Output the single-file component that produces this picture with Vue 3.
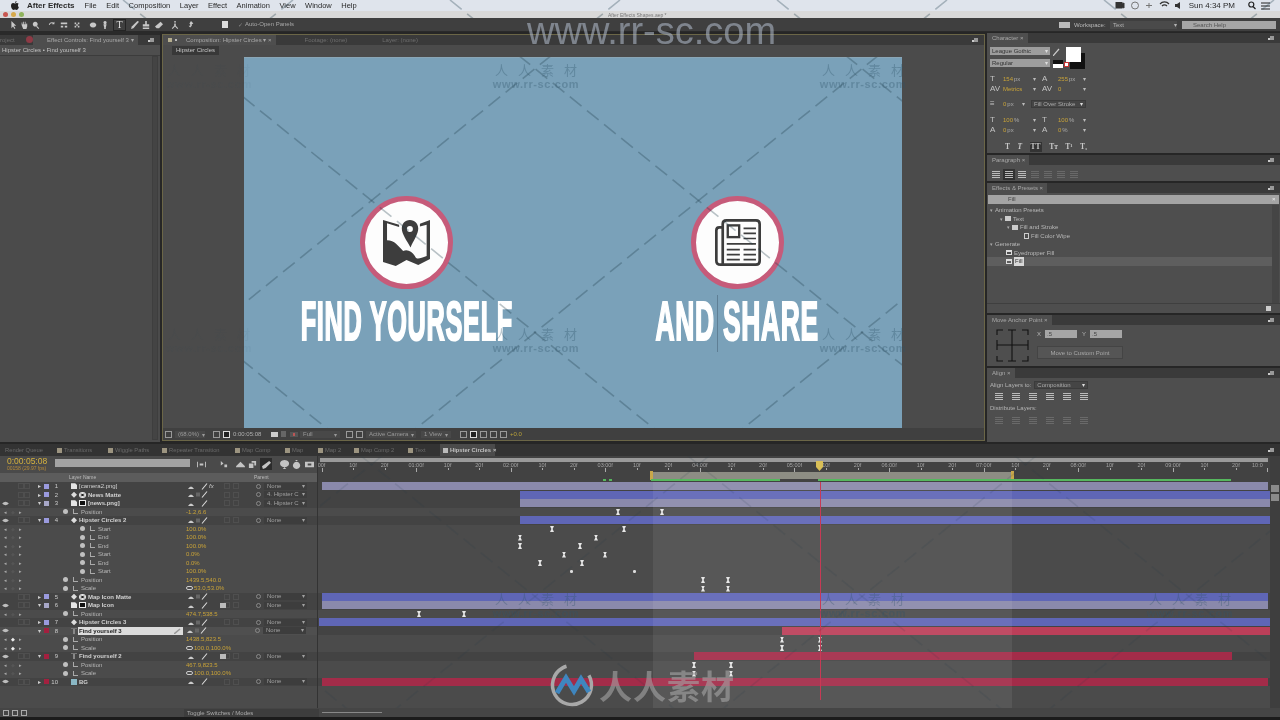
<script setup>
const menus = ['File', 'Edit', 'Composition', 'Layer', 'Effect', 'Animation', 'View', 'Window', 'Help']

const tools = [
  { x: 9, d: 'M3 0v9l2-2 2 3 1-1-2-3h3z' },
  { x: 20, d: 'M2 5V2h1v2h1V1h1v3h1V1h1v3h1V3h1v4L8 10H4z' },
  { x: 32, d: 'M4 1a3 3 0 1 0 .1 0zM6 6l3 3-1 1-3-3z' },
  { x: 48, d: 'M1 5a4 4 0 0 1 6-3l1-1v3H5l1-1a3 3 0 0 0-4 2z' },
  { x: 60, d: 'M1 2h8v2H1zM1 6h3v2H1zM6 6h3v2H6z' },
  { x: 73, d: 'M2 2h2v2H2zM6 2h2v2H6zM4 4h2v2H4zM2 6h2v2H2zM6 6h2v2H6z' },
  { x: 89, d: 'M5 2a4 3 0 1 0 .1 0z' },
  { x: 101, d: 'M5 0a2 2 0 1 0 .1 0zM3 4h4l-1 4H4zM4 8h2v2H4z' },
  { x: 131, d: 'M8 0l2 1-7 8-3 1 1-3z' },
  { x: 142, d: 'M4 0h2v4h3v3H1V4h3zM1 8h8v2H1z' },
  { x: 155, d: 'M7 1l3 3-5 5H2L0 7z' },
  { x: 171, d: 'M5 0a1 1 0 1 0 .1 0zM4 3h2v3l3 3-1 1-3-3-3 3-1-1 3-3z' },
  { x: 187, d: 'M5 0l3 3-2 1v2L4 8 2 6h2V4L3 3z' }
]

const tlIcons = [
  { x: 0, d: 'M0 2h1v6H0zM3 4h4v2H3zM9 2h1v6H9z' },
  { x: 22, d: 'M2 1l3 3-3 2zM6 5h3v3H6z' },
  { x: 39, d: 'M5 2l5 5v1H0V7z' },
  { x: 51, d: 'M1 4h5v5H1zM4 1h5v5H7V3H4z' },
  { x: 65, d: 'M8 1l2 2-6 6-3 1-1-3z' },
  { x: 83, d: 'M5 0a5 4 0 1 0 .1 0zM3 10h4l-2-2z' },
  { x: 95, d: 'M5 2a4 4 0 1 0 .1 0zM4 0h2v1H4z' },
  { x: 108, d: 'M0 2h10v6H0zM3 4v2h4V4z' }
]

const tlTabs = [
  { name: 'Render Queue', w: 52, plain: true },
  { name: 'Transitions', w: 51 },
  { name: 'Wiggle Paths', w: 54 },
  { name: 'Repeater Transition', w: 73 },
  { name: 'Map Comp', w: 50 },
  { name: 'Map', w: 33 },
  { name: 'Map 2', w: 36 },
  { name: 'Map Comp 2', w: 54 },
  { name: 'Text', w: 32 },
  { name: 'Hipster Circles', w: 55, active: true }
]

const LAV = '#8a89ab'
const BLUE = '#5f66b6'
const ROSE = '#bc3f59'
const RED = '#a32c49'
const PURPLE = '#9a9ade'
const CRIM = '#a3203f'

const rows = [
  { n: 1, name: '[camera2.png]', src: 'file', color: PURPLE, twirl: '▸', eye: false, fx: true, parent: 'None', bar: [322, 1268, LAV], plain: true },
  { n: 2, name: 'News Matte', src: 'star', matte: 'light', color: PURPLE, twirl: '▸', eye: false, box: true, parent: '4. Hipster C', bar: [520, 1270, BLUE] },
  { n: 3, name: '[news.png]', src: 'file', matte: 'dark', color: '#a8a8c8', twirl: '▾', eye: true, parent: '4. Hipster C', bar: [520, 1270, LAV] },
  { prop: 'Position', value: '-1.2,6.6', keys: [618, 662] },
  { n: 4, name: 'Hipster Circles 2', src: 'star', color: PURPLE, twirl: '▾', eye: true, box: true, parent: 'None', bar: [520, 1270, BLUE] },
  { prop: 'Start', deep: true, value: '100.0%', keys: [552, 624] },
  { prop: 'End', deep: true, value: '100.0%', keys: [520, 596] },
  { prop: 'End', deep: true, value: '100.0%', keys: [520, 580] },
  { prop: 'Start', deep: true, value: '0.0%', keys: [564, 605] },
  { prop: 'End', deep: true, value: '0.0%', keys: [540, 582] },
  { prop: 'Start', deep: true, value: '100.0%', dots: [571, 634] },
  { prop: 'Position', value: '1439.5,540.0', keys: [703, 728] },
  { prop: 'Scale', link: true, value: '53.0,53.0%', keys: [703, 728] },
  { n: 5, name: 'Map Icon Matte', src: 'star', matte: 'light', color: PURPLE, twirl: '▸', eye: false, box: true, parent: 'None', bar: [322, 1268, BLUE] },
  { n: 6, name: 'Map Icon', src: 'file', matte: 'dark', color: '#a8a8c8', twirl: '▾', eye: true, cam: true, parent: 'None', bar: [322, 1268, LAV] },
  { prop: 'Position', value: '474.7,538.5', keys: [419, 464] },
  { n: 7, name: 'Hipster Circles 3', src: 'star', color: PURPLE, twirl: '▸', eye: false, box: true, parent: 'None', bar: [319, 1270, BLUE] },
  { n: 8, name: 'Find yourself 3', src: 'text', color: CRIM, twirl: '▾', eye: true, box: true, parent: 'None', bar: [782, 1270, ROSE], selected: true },
  { prop: 'Position', value: '1438.5,823.5', keys: [782, 820], on: true },
  { prop: 'Scale', link: true, value: '100.0,100.0%', keys: [782, 820], on: true },
  { n: 9, name: 'Find yourself 2', src: 'text', color: CRIM, twirl: '▾', eye: true, cam: true, parent: 'None', bar: [694, 1232, RED], thin: true },
  { prop: 'Position', value: '467.9,823.5', keys: [694, 731] },
  { prop: 'Scale', link: true, value: '100.0,100.0%', keys: [694, 731] },
  { n: 10, name: 'BG', src: 'solid', color: CRIM, twirl: '▸', eye: true, parent: 'None', bar: [322, 1268, RED] }
]

// ruler: one second is 94.6px, a tick every 10 frames
const ticks = []
for (let i = 0; i <= 30; i++) {
  const sec = Math.floor(i / 3)
  const major = i % 3 === 0
  let label = (i % 3) * 10 + 'f'
  if (i === 0) label = '00f'
  else if (i === 30) label = '10:0'
  else if (major) label = String(sec).padStart(2, '0') + ':00f'
  ticks.push({ x: 3.5 + i * 31.53, label, major, last: i === 30 })
}

const trackX = x => x - 318

const effects = [
  { text: 'Animation Presets', pad: 3, twirl: true },
  { text: 'Text', pad: 13, twirl: true, icon: 'folder' },
  { text: 'Fill and Stroke', pad: 20, twirl: true, icon: 'folder' },
  { text: 'Fill Color Wipe', pad: 37, icon: 'preset' },
  { text: 'Generate', pad: 3, twirl: true },
  { text: 'Eyedropper Fill', pad: 19, icon: 'fx' },
  { text: 'Fill', pad: 19, icon: 'fx', active: true }
]

// faint watermark tiles and the diagonals between them
const marks = [
  { x: 209, y: 60, dim: true },
  { x: 209, y: 324, dim: true },
  { x: 536, y: 60 },
  { x: 863, y: 60 },
  { x: 536, y: 324 },
  { x: 863, y: 324 },
  { x: 536, y: 589 },
  { x: 863, y: 589 },
  { x: 1190, y: 589 }
]
const diagonals = []
for (let k = -3; k <= 3; k++) {
  const a = 123 + 327 * k
  diagonals.push({ x1: a, x2: a + 892 })
}
for (let k = -1; k <= 5; k++) {
  const b = 293 + 327 * k
  diagonals.push({ x1: b, x2: b - 892 })
}
</script>

<template>
  <div class="app">
    <div class="menubar">
      <svg class="apple" width="8" height="9" viewBox="0 0 10 11"><path d="M7 0C6 0 5 1 5 2.4 6 2.4 7 1.4 7 0zM5 3C4 3 3.5 2.5 2.7 2.5 1 2.5 0 4 0 6c0 2 1.5 5 3 5 .8 0 1.2-.5 2-.5s1.200.5 2 .5c1.200 0 2.400-2 2.800-3.400C8.500 7 8.200 4 9.600 3.400 9 2.700 8 2.500 7.400 2.500 6.500 2.500 6 3 5 3z" fill="#222" /></svg>
      <b class="menu-app">After Effects</b>
      <span v-for="m in menus" :key="m" class="menu-item">{{ m }}</span>
      <div class="menu-right">
        <svg width="58" height="9" viewBox="0 0 58 9" fill="none" stroke="#333">
          <rect x="4" y="1.500" width="6" height="5.500" fill="#333" />
          <path d="M10 3l2-1v5l-2-1" fill="#333" />
          <circle cx="23" cy="4.500" r="3.500" stroke="#777" />
          <path d="M34 4.500h6M37 2v5" stroke="#777" />
          <path d="M48 3a6 6 0 0 1 9 0M50 5a3.500 3.500 0 0 1 5 0" stroke-width="1.200" />
        </svg>
        <svg width="6" height="9" viewBox="0 0 6 9"><path d="M0 3h2l3-2v7L2 6H0z" fill="#333" /></svg>
        <span class="clock">Sun 4:34 PM</span>
        <svg width="8" height="9" viewBox="0 0 8 9" fill="none" stroke="#222" stroke-width="1.200"><circle cx="3.300" cy="3.500" r="2.500" /><path d="M5 5.500l2.500 2.500" /></svg>
        <svg width="9" height="8" viewBox="0 0 9 8" fill="none" stroke="#222"><path d="M0 1h9M0 4h9M0 7h9" /></svg>
      </div>
    </div>

    <div class="titlebar">
      <i class="light red"></i><i class="light amber"></i><i class="light green"></i>
      <span class="doc-title">After Effects Shapes.aep *</span>
    </div>

    <div class="toolbar">
      <div class="tool-icons">
        <svg v-for="t in tools" :key="t.x" class="tool" :style="{ left: t.x + 'px' }" width="8" height="8" viewBox="0 0 10 10"><path :d="t.d" fill="#c8c8c8" /></svg>
        <span class="tool-t">T</span>
        <i class="tool-file"></i>
      </div>
      <span class="auto-open"><span class="check">✓</span>Auto-Open Panels</span>
      <div class="workspace">
        <i class="ws-icon"></i>
        <span class="ws-label">Workspace:</span>
        <span class="ws-select">Text<em>▾</em></span>
        <span class="ws-search">Search Help</span>
      </div>
    </div>

    <div class="main">
      <div class="left-panel">
        <div class="strip"></div>
        <div class="tabbar">
          <span class="tab dim">roject</span>
          <i class="tab-dot"></i>
          <span class="tab on">Effect Controls: Find yourself 3 <em>▾</em></span>
          <span class="panel-menu"></span>
        </div>
        <div class="sub-row">Hipster Circles • Find yourself 3</div>
        <div class="left-body"><i class="scroll"></i></div>
      </div>

      <div class="comp-panel">
        <div class="tabbar comp-tabs">
          <span class="tab on"><i class="tab-square"></i>Composition: Hipster Circles <em>▾</em> ×</span>
          <span class="tab dim footage">Footage: (none)</span>
          <span class="tab dim layer-tab">Layer: (none)</span>
          <span class="panel-menu"></span>
        </div>
        <div class="crumb-row"><span class="crumb">Hipster Circles</span></div>
        <div class="viewer">
          <div class="canvas">
            <div class="promo find">
              <div class="badge">
                <svg width="47" height="46" viewBox="310 118 140 137">
                  <path fill="#3d3d3d" d="M310 118L358 132V139L322 128V178C345 178 355 195 370 210C385 205 395 212 405 225C410 238 420 232 440 225V132L420 137V129L450 118V234L415 252L380 237L348 255L310 243Z" />
                  <path fill="#3d3d3d" fill-rule="evenodd" d="M390 118C375 118 366 130 366 143C366 160 382 180 392 200C400 180 415 160 415 143C415 130 405 118 390 118ZM390 136A9 9 0 1 0 390.100 154A9 9 0 1 0 390 136Z" />
                </svg>
              </div>
              <div class="headline">FIND YOURSELF</div>
            </div>
            <div class="promo share">
              <div class="badge">
                <svg width="46" height="47" viewBox="223 122 137 140" fill="none" stroke="#3d3d3d">
                  <path stroke-width="8" d="M246 147H236Q227 147 227 156V246Q227 258 240 258H345Q356 258 356 247V137Q356 126 345 126H257Q246 126 246 137V258" />
                  <rect x="261" y="141" width="34" height="35" stroke-width="7" />
                  <path stroke-width="5" d="M308 150H345M308 165H345M308 180H345M258 196H345M258 213H297M308 213H345M258 228H297M308 228H345M258 243H297M308 243H345" />
                </svg>
              </div>
              <div class="headline">AND SHARE</div>
              <i class="caret"></i>
            </div>
          </div>
        </div>
        <div class="viewer-bar">
          <i class="vb-box"></i>
          <span class="vb-select zoomlevel">(68.0%) <em>▾</em></span>
          <i class="vb-box first"></i><i class="vb-box lit"></i>
          <span class="vb-time">0:00:05:08</span>
          <i class="vb-cam"></i>
          <i class="vb-lock"></i>
          <i class="vb-dots"></i>
          <span class="vb-select full">Full <em>▾</em></span>
          <i class="vb-box"></i><i class="vb-box"></i>
          <span class="vb-select cam">Active Camera <em>▾</em></span>
          <span class="vb-select view">1 View <em>▾</em></span>
          <i class="vb-box"></i><i class="vb-box lit"></i><i class="vb-box"></i><i class="vb-box"></i><i class="vb-box"></i>
          <span class="vb-exposure">+0.0</span>
        </div>
      </div>

      <div class="right-col">
        <section class="panel character">
          <div class="tabbar"><span class="tab on">Character ×</span><span class="panel-menu"></span></div>
          <div class="char-body">
            <div class="char-fonts">
              <div class="font-selects">
                <span class="field">League Gothic<em>▾</em></span>
                <span class="field">Regular<em>▾</em></span>
              </div>
              <svg class="dropper" width="8" height="8" viewBox="0 0 8 8"><path d="M0 8l6-7" stroke="#ccc" stroke-width="1.200" /></svg>
              <div class="swatches">
                <i class="sw-black"></i><i class="sw-white"></i>
                <i class="sw-mini"></i><i class="sw-none"></i>
              </div>
            </div>
            <div class="char-grid">
              <span class="c"><u>T</u><b>154</b> px<em>▾</em></span><span class="c"><u>A</u><b>255</b> px<em>▾</em></span>
              <span class="c"><u>AV</u><b>Metrics</b><em>▾</em></span><span class="c"><u>AV</u><b>0</b><em>▾</em></span>
            </div>
            <div class="char-stroke">
              <span class="c"><u>≡</u><b>0</b> px<em>▾</em></span>
              <span class="field dark">Fill Over Stroke<em>▾</em></span>
            </div>
            <div class="char-grid lower">
              <span class="c"><u>T</u><b>100</b> %<em>▾</em></span><span class="c"><u>T</u><b>100</b> %<em>▾</em></span>
              <span class="c"><u>A</u><b>0</b> px<em>▾</em></span><span class="c"><u>A</u><b>0</b> %<em>▾</em></span>
            </div>
            <div class="char-styles">
              <span>T</span><span class="ital">T</span><span class="sel">TT</span><span>Tт</span><span>T¹</span><span>T₁</span>
            </div>
          </div>
        </section>

        <section class="panel paragraph">
          <div class="tabbar"><span class="tab on">Paragraph ×</span><span class="panel-menu"></span></div>
          <div class="icon-row para">
            <i class="lines"></i><i class="lines sel"></i><i class="lines"></i>
            <i class="lines faint"></i><i class="lines faint"></i><i class="lines faint"></i><i class="lines faint"></i>
          </div>
        </section>

        <section class="panel effects">
          <div class="tabbar"><span class="tab on">Effects &amp; Presets ×</span><span class="panel-menu"></span></div>
          <div class="fx-search"><span class="fx-query">Fill</span><i>×</i></div>
          <div class="fx-body">
            <div class="fx-tree">
              <div v-for="e in effects" :key="e.text" class="fx-row" :class="{ active: e.active }" :style="{ paddingLeft: e.pad + 'px' }">
                <em v-if="e.twirl">▾</em>
                <i v-if="e.icon" :class="'fx-' + e.icon"></i>
                <span>{{ e.text }}</span>
              </div>
            </div>
            <i class="fx-scroll"></i>
          </div>
          <div class="fx-foot"><i></i></div>
        </section>

        <section class="panel anchor">
          <div class="tabbar"><span class="tab on">Move Anchor Point ×</span><span class="panel-menu"></span></div>
          <div class="anchor-body">
            <svg width="33" height="33" viewBox="0 0 33 33" fill="none" stroke="#111" stroke-width="1.100">
              <path d="M1 6V1h6M12 1h8M16 1v11M26 1h6v5M1 11v10M1 16h31M32 11v10M16 12v10M1 27v5h6M12 32h8M16 22v10M26 32h6v-5" />
            </svg>
            <div class="anchor-side">
              <div class="xy"><span>X</span><i>.5</i><span>Y</span><i>.5</i></div>
              <div class="btn">Move to Custom Point</div>
            </div>
          </div>
        </section>

        <section class="panel align">
          <div class="tabbar"><span class="tab on">Align ×</span><span class="panel-menu"></span></div>
          <div class="align-body">
            <div class="align-to"><span>Align Layers to:</span><span class="field dark">Composition<em>▾</em></span></div>
            <div class="icon-row al"><i v-for="n in 6" :key="n" class="lines"></i></div>
            <div class="dist">Distribute Layers:</div>
            <div class="icon-row al"><i v-for="n in 6" :key="n" class="lines faint"></i></div>
          </div>
        </section>
      </div>
    </div>

    <div class="timeline">
      <div class="tl-tabs">
        <span v-for="t in tlTabs" :key="t.name" class="tl-tab" :class="{ active: t.active }" :style="{ width: t.w + 'px' }"><i v-if="!t.plain"></i>{{ t.name }}<em v-if="t.active">×</em></span>
        <span class="panel-menu tl-menu"></span>
      </div>
      <div class="tl-top">
        <div class="tl-controls">
          <div class="tl-head">
            <div class="timecode"><b>0:00:05:08</b><span>00158 (29.97 fps)</span></div>
            <div class="tl-search"></div>
            <div class="tl-icons">
              <i class="mb-sel"></i>
              <svg v-for="t in tlIcons" :key="t.x" :style="{ left: t.x + 'px' }" width="9" height="9" viewBox="0 0 10 10"><path :d="t.d" fill="#c4c4c4" /></svg>
            </div>
          </div>
          <div class="col-head">
            <span class="ch-name">Layer Name</span>
            <span class="ch-parent">Parent</span>
          </div>
        </div>
        <div class="ruler">
          <div class="nav-bar"></div>
          <div v-for="t in ticks" :key="t.x" class="tick" :class="{ major: t.major, last: t.last }" :style="{ left: t.x + 'px' }">
            <span>{{ t.label }}</span><i></i>
          </div>
          <div class="work-bar"></div>
          <i class="wa-handle" style="left: 332px"></i>
          <i class="wa-handle" style="left: 693px"></i>
          <i class="cache" style="left: 333px; width: 129px"></i>
          <i class="cache" style="left: 500px; width: 413px"></i>
          <i class="cache" style="left: 285px; width: 3px"></i>
          <i class="cache" style="left: 291px; width: 3px"></i>
          <i class="cti-head"></i>
        </div>
        <div class="tl-side"></div>
      </div>

      <div class="tl-main">
        <div class="tl-rows">
          <div v-for="(r, i) in rows" :key="i" class="tl-row" :class="{ layer: r.n, prop: r.prop, sel: r.selected }">
            <div class="tl-left">
              <template v-if="r.n">
                <span class="sw-col">
                  <svg v-if="r.eye" width="7" height="5" viewBox="0 0 8 6"><path d="M0 3q4-4 8 0q-4 4-8 0z" fill="#bdbdbd" /></svg>
                  <i class="ghost"></i><i class="ghost"></i>
                </span>
                <span class="twirl">{{ r.twirl }}</span>
                <i class="label" :style="{ background: r.color }"></i>
                <span class="num">{{ r.n }}</span>
                <span class="src" :class="'src-' + r.src"></span>
                <span class="lname" :class="{ plain: r.plain, shifted: r.matte }">
                  <i v-if="r.matte" class="matte" :class="r.matte"></i>
                  <span>{{ r.name }}</span>
                  <svg v-if="r.selected" class="lpen" width="7" height="6" viewBox="0 0 7 6"><path d="M0 6l6-5" stroke="#999" stroke-width="1.500" /></svg>
                </span>
                <span class="switches">
                  <svg width="24" height="7" viewBox="0 0 24 7"><path d="M1 6q3-5 6 0z" fill="#ccc" /><rect v-if="r.box" x="9" y="1.500" width="4" height="4" fill="#666" /><path d="M15 6.500l5-6" stroke="#ddd" stroke-width="1.100" /></svg>
                  <small v-if="r.fx">fx</small>
                  <i v-if="r.cam" class="cam-ic"></i>
                </span>
                <span class="modes"><i class="ghost"></i><i class="ghost"></i></span>
                <span class="spiral"></span>
                <span class="parent">{{ r.parent }}<em>▾</em></span>
              </template>
              <template v-else>
                <span class="nav"><em>◂</em><em :class="{ lit: r.on }">◆</em><em>▸</em></span>
                <span class="stop" :class="{ deep: r.deep }"></span>
                <span class="graph"></span>
                <span class="pname">{{ r.prop }}</span>
                <span class="pvalue" :class="{ linked: r.link }"><svg v-if="r.link" width="7" height="4" viewBox="0 0 7 4" fill="none" stroke="#ccc"><rect x=".5" y=".5" width="6" height="3" rx="1.500" /></svg>{{ r.value }}</span>
              </template>
            </div>
            <div class="tl-track">
              <i v-if="r.bar" class="bar" :class="{ thin: r.thin }" :style="{ left: trackX(r.bar[0]) + 'px', width: r.bar[1] - r.bar[0] + 'px', background: r.bar[2] }"></i>
              <i v-for="k in r.keys" :key="k" class="key" :style="{ left: trackX(k) - 2 + 'px' }"></i>
              <i v-for="k in r.dots" :key="k" class="dot" :style="{ left: trackX(k) - 1 + 'px' }"></i>
            </div>
          </div>
          <div class="tl-empty"><div class="tl-left"></div><div class="tl-track"></div></div>
          <i class="work-shade"></i>
          <i class="cti-line"></i>
        </div>
        <div class="tl-side scroller"><i></i><i></i></div>
      </div>

      <div class="tl-foot">
        <i class="foot-ic"></i><i class="foot-ic"></i><i class="foot-ic"></i>
        <span class="toggle">Toggle Switches / Modes</span>
        <i class="zoom-bar"></i>
      </div>
    </div>
    <div class="bottom-edge"></div>

    <div class="overlay">
      <svg class="dashes" width="1280" height="720" viewBox="0 0 1280 720">
        <defs>
          <clipPath id="bright">
            <rect x="244" y="57" width="658" height="371" />
            <rect x="0" y="0" width="1280" height="18" />
          </clipPath>
          <clipPath id="track">
            <rect x="320" y="456" width="950" height="252" />
          </clipPath>
        </defs>
        <g clip-path="url(#track)" stroke="#1e3a4a" stroke-width="1.600" stroke-dasharray="15 7" stroke-opacity=".12">
          <line v-for="d in diagonals" :key="d.x1" :x1="d.x1" y1="0" :x2="d.x2" y2="720" />
        </g>
        <g clip-path="url(#bright)" stroke="#1e3a4a" stroke-width="1.600" stroke-dasharray="15 7" stroke-opacity=".3">
          <line v-for="d in diagonals" :key="d.x1" :x1="d.x1" y1="0" :x2="d.x2" y2="720" />
        </g>
      </svg>
      <div v-for="m in marks" :key="m.x + '-' + m.y" class="mark" :class="{ dim: m.dim }" :style="{ left: m.x + 'px', top: m.y + 'px' }">
        <span class="mark-cn">人人素材</span>
        <span class="mark-en">www.rr-sc.com</span>
      </div>
      <div class="site">www.rr-sc.com</div>
      <div class="brand">
        <svg width="46" height="46" viewBox="0 0 46 46" fill="none">
          <circle cx="23" cy="23" r="19.500" stroke="#a8a8a8" stroke-width="3.500" stroke-dasharray="96 26" transform="rotate(-30 23 23)" />
          <path d="M8 31L17 16l8 13 7-12 8 13" stroke="#3f86bf" stroke-width="5" />
        </svg>
        <span>人人素材</span>
      </div>
    </div>
  </div>
</template>

<style scoped>
.app {
  position: relative;
  width: 1280px;
  height: 720px;
  overflow: hidden;
  display: flex;
  flex-direction: column;
  background: #222;
  font-family: "Liberation Sans", Arial, sans-serif;
  font-size: 6px;
  color: #b4b4b4;
  filter: blur(0.35px);
}
em { font-style: normal; }
i { display: block; font-style: normal; }

/* mac menu bar */
.menubar {
  height: 11px;
  flex: none;
  display: flex;
  align-items: center;
  padding-left: 11px;
  background: #dfe4ec;
  color: #2a2a2a;
  font-size: 7.5px;
}
.menu-app { margin: 0 10px 0 8px; font-size: 8px; }
.menu-item { margin-right: 9.5px; }
.menu-right {
  margin-left: auto;
  padding-right: 10px;
  display: flex;
  align-items: center;
  gap: 5px;
}
.clock { margin: 0 8px 0 3px; font-size: 8px; }
.titlebar {
  height: 7px;
  flex: none;
  display: flex;
  align-items: center;
  gap: 3px;
  padding-left: 3px;
  background: #d9d9d9;
  position: relative;
}
.light { width: 5px; height: 5px; border-radius: 50%; }
.red { background: #c9574f; }
.amber { background: #d6a94a; }
.green { background: #8fb35b; }
.doc-title {
  margin-left: 581px;
  font-size: 5px;
  color: #777;
}

/* tools */
.toolbar {
  height: 14px;
  flex: none;
  display: flex;
  align-items: center;
  background: #3f3f3f;
  border-bottom: 1px solid #2a2a2a;
  box-sizing: border-box;
}
.tool-icons { position: relative; width: 232px; height: 14px; flex: none; }
.tool { position: absolute; top: 3px; }
.tool-t {
  position: absolute;
  left: 113px;
  top: 1px;
  width: 11px;
  height: 10px;
  border: 1px solid #242424;
  font: 10px/10px "Liberation Serif", serif;
  color: #ddd;
  text-align: center;
}
.tool-file { position: absolute; left: 222px; top: 3px; width: 6px; height: 7px; background: #ddd; }
.auto-open { color: #a8a8a8; display: flex; gap: 2px; margin-left: 6px; }
.check { color: #888; }
.workspace { margin-left: auto; display: flex; align-items: center; padding-right: 4px; }
.ws-icon { width: 11px; height: 6px; background: #bbb; margin-right: 4px; }
.ws-label { color: #bbb; margin-right: 6px; width: 30px; white-space: nowrap; }
.ws-select {
  width: 67px;
  height: 8px;
  line-height: 8px;
  background: #4a4a4a;
  padding-left: 3px;
  box-sizing: border-box;
  display: flex;
  justify-content: space-between;
  margin-right: 5px;
}
.ws-search {
  width: 94px;
  height: 8px;
  line-height: 8px;
  background: #a6a6a6;
  color: #555;
  padding-left: 11px;
  box-sizing: border-box;
}

/* panels */
.main { height: 412px; flex: none; display: flex; background: #262626; }
.tabbar {
  height: 10px;
  flex: none;
  display: flex;
  align-items: stretch;
  position: relative;
  background: #3a3a3a;
}
.tab {
  padding: 0 4px 0 5px;
  line-height: 10px;
  color: #a8a8a8;
  white-space: nowrap;
  position: relative;
}
.tab.on { background: #4e4e4e; }
.tab.dim { color: #6e6e6e; }
.panel-menu {
  position: absolute;
  right: 6px;
  top: 3px;
  width: 4px;
  height: 4px;
  background: #999;
  box-shadow: -3px 1px 0 -1px #ccc;
}

.left-panel { width: 160px; flex: none; display: flex; flex-direction: column; }
.strip { height: 3px; background: #2a2a2a; flex: none; }
.left-panel .tab.dim { padding: 0; width: 26px; }
.tab-dot { width: 7px; height: 7px; margin-top: 1px; border-radius: 50%; background: #8d3a45; flex: none; margin-right: 3px; }
.left-panel .tab.on { padding-left: 14px; margin-left: -3px; }
.sub-row {
  height: 10px;
  line-height: 10px;
  padding-left: 2px;
  background: #4e4e4e;
  color: #c2c2c2;
  border-bottom: 1px solid #3c3c3c;
  flex: none;
}
.left-body { flex: 1; background: #4b4b4b; position: relative; margin-bottom: 2px; }
.scroll {
  position: absolute;
  right: 2px;
  top: 0;
  bottom: 2px;
  width: 6px;
  background: #444;
  border: 1px solid #3e3e3e;
  box-sizing: border-box;
}

.comp-panel {
  width: 823px;
  flex: none;
  margin: 2px 2px 3px 2px;
  box-sizing: border-box;
  border: 1px solid #6b6647;
  display: flex;
  flex-direction: column;
  background: #4b4b4b;
}
.comp-tabs .tab.on { padding-left: 23px; }
.tab-square { position: absolute; left: 5px; top: 3px; width: 4px; height: 4px; background: #b4ad8f; box-shadow: 6px 0 0 -1px #bbb; }
.footage { margin-left: 24px; }
.layer-tab { margin-left: 26px; }
.crumb-row { height: 12px; flex: none; padding: 1px 0 0 9px; box-sizing: border-box; }
.crumb {
  display: inline-block;
  padding: 0 4px;
  line-height: 9px;
  background: #383838;
  color: #c6c6c6;
}
.viewer { height: 371px; flex: none; padding-left: 81px; }
.canvas {
  position: relative;
  width: 658px;
  height: 371px;
  background: #7aa1b9;
  box-shadow: inset 0 1px 0 #8aa6b6;
  overflow: hidden;
}
.promo { position: absolute; top: 139px; width: 260px; margin-left: -130px; display: flex; flex-direction: column; align-items: center; }
.find { left: 162.5px; }
.share { left: 493.5px; }
.badge {
  width: 93px;
  height: 93px;
  box-sizing: border-box;
  border-radius: 50%;
  border: 5px solid #c65b7a;
  background: #fdfdfd;
  display: flex;
  align-items: center;
  justify-content: center;
}
.headline {
  margin-top: 5px;
  font: bold 55px/54px "Liberation Sans", sans-serif;
  letter-spacing: 1.5px;
  color: #fff;
  white-space: nowrap;
  -webkit-text-stroke: 2.2px #fff;
  transform: scaleX(0.48);
  transform-origin: center;
}
.find .headline { transform: scaleX(0.46); }
.caret {
  position: absolute;
  left: 109px;
  top: 99px;
  width: 1px;
  height: 57px;
  background: #5f7f95;
}
.viewer-bar {
  flex: 1;
  min-height: 0;
  display: flex;
  align-items: center;
  gap: 2px;
  padding-left: 2px;
  background: #404040;
  white-space: nowrap;
}
.vb-box { width: 7px; height: 7px; border: 1px solid #999; box-sizing: border-box; margin-right: 1px; flex: none; }
.vb-box.lit { background: #222; border-color: #ddd; }
.vb-box.first { margin-left: 6px; }
.vb-select { color: #999; padding: 0 3px; background: #484848; display: flex; gap: 3px; justify-content: space-between; box-sizing: border-box; flex: none; }
.zoomlevel { width: 30px; }
.vb-select.full { width: 40px; margin-right: 4px; }
.vb-select.cam { width: 50px; }
.vb-select.view { width: 30px; margin: 0 7px 0 3px; }
.vb-time { color: #b0b0b0; margin-right: 6px; width: 30px; }
.vb-cam { width: 7px; height: 5px; background: #ccc; margin-right: 1px; }
.vb-lock { width: 5px; height: 6px; background: #666; margin-right: 1px; }
.vb-dots { width: 8px; height: 5px; background: radial-gradient(circle, #b55 30%, #555 31%); margin-left: 1px; }
.vb-exposure { color: #b8a23a; }

/* right column */
.right-col {
  flex: 1;
  display: flex;
  flex-direction: column;
  gap: 2px;
  padding: 1px 0 2px;
  min-width: 0;
}
.panel { background: #4e4e4e; display: flex; flex-direction: column; }
.character { height: 120px; }
.paragraph { height: 26px; }
.effects { height: 130px; }
.anchor { height: 51px; }
.align { height: 74px; }
.field {
  display: flex;
  justify-content: space-between;
  height: 8px;
  line-height: 8px;
  padding: 0 2px;
  background: #9d9d9d;
  color: #333;
  box-sizing: border-box;
  white-space: nowrap;
}
.field em { color: #ddd; }
.field.dark { background: #454545; color: #aaa; border: 1px solid #3b3b3b; line-height: 6px; }
.char-body { padding: 4px 0 0 3px; }
.char-fonts { display: flex; height: 23px; }
.font-selects { width: 60px; display: flex; flex-direction: column; gap: 4px; }
.dropper { margin: 1px 3px 0 3px; }
.swatches { position: relative; width: 34px; }
.sw-black { position: absolute; left: 6px; top: 6px; width: 15px; height: 16px; background: #111; }
.sw-white { position: absolute; left: 2px; top: 0; width: 15px; height: 15px; background: #fff; }
.sw-mini { position: absolute; left: -11px; top: 13px; width: 10px; height: 8px; background: linear-gradient(#111 50%, #fff 50%); }
.sw-none { position: absolute; left: 0; top: 15px; width: 5px; height: 5px; background: #fff; border: 1px solid #c33; box-sizing: border-box; }
.char-grid {
  display: grid;
  grid-template-columns: 52px 50px;
  grid-auto-rows: 10px;
  margin-top: 3.5px;
}
.char-grid.lower { margin-top: 6px; }
.c { display: flex; align-items: center; position: relative; gap: 1px; color: #aaa; line-height: 10px; white-space: nowrap; }
.c u { width: 12px; text-decoration: none; color: #c4c4c4; font-size: 8px; flex: none; }
.c:nth-child(even) u { width: 15px; }
.c b { font-weight: normal; color: #c9a338; }
.c em { position: absolute; right: 6px; color: #bbb; }
.char-stroke { display: grid; grid-template-columns: 41px 55px; height: 10px; margin-top: 5px; align-items: center; }
.char-styles {
  display: flex;
  gap: 7.5px;
  margin: 7px 0 0 15px;
  height: 10px;
  font: bold 7.5px/10px "Liberation Serif", serif;
  color: #c8c8c8;
}
.char-styles .ital { font-style: italic; }
.char-styles .sel { background: #333; padding: 0 1px; }
.icon-row { display: flex; align-items: center; }
.icon-row.para { gap: 5px; padding: 3px 0 0 5px; height: 12px; }
.lines {
  width: 8px;
  height: 7px;
  background: repeating-linear-gradient(#bbb 0 1px, transparent 1px 2px);
}
.lines.sel { outline: 2px solid #333; background-color: #333; }
.lines.faint { opacity: 0.25; }
.fx-search {
  margin: 2px 1px 0 1px;
  height: 9px;
  line-height: 9px;
  background: #a4a4a4;
  color: #444;
  padding-left: 20px;
  position: relative;
  flex: none;
}
.fx-search i { position: absolute; right: 1px; top: 0; width: 6px; color: #eee; }
.fx-body { flex: 1; display: flex; padding: 1px 0 0 0; min-height: 0; }
.fx-tree { flex: 1; padding-top: 1px; }
.fx-row { height: 8.5px; line-height: 8.5px; display: flex; align-items: center; gap: 2px; color: #b8b8b8; }
.fx-row.active { background: #5e5e5e; }
.fx-row.active span { background: #d8d8d8; color: #333; padding: 0 1px; width: 8px; }
.fx-row em { color: #aaa; font-size: 5px; }
.fx-folder { width: 6px; height: 5px; background: #ccc; }
.fx-preset { width: 5px; height: 6px; border: 1px solid #ccc; box-sizing: border-box; }
.fx-fx { width: 6px; height: 5px; border: 1px solid #ddd; border-top-width: 2px; box-sizing: border-box; }
.fx-scroll { width: 7px; margin-right: 1px; background: #454545; }
.fx-foot { height: 9px; border-top: 1px solid #3f3f3f; position: relative; flex: none; }
.fx-foot i { position: absolute; right: 9px; top: 2px; width: 5px; height: 5px; background: #ccc; }
.anchor-body { display: flex; padding: 4px 0 0 9px; gap: 8px; }
.anchor-side { width: 86px; }
.xy { display: flex; align-items: center; height: 9px; gap: 4px; }
.xy i { width: 33px; height: 8px; line-height: 8px; background: #a6a6a6; color: #444; padding-left: 2px; box-sizing: border-box; margin-right: 1px; }
.btn {
  margin-top: 8px;
  height: 13px;
  line-height: 13px;
  text-align: center;
  background: #555;
  border: 1px solid #444;
  box-sizing: border-box;
  color: #a8a8a8;
}
.align-body { padding: 2px 0 0 3px; }
.align-to { display: flex; align-items: center; gap: 3px; height: 9px; white-space: nowrap; }
.align-to .field { width: 54px; }
.icon-row.al { gap: 9px; height: 14px; padding-left: 5px; }
.dist { height: 9px; line-height: 9px; margin-top: 1px; }

/* timeline */
.timeline { flex: 1; display: flex; flex-direction: column; min-height: 0; background: #4a4a4a; }
.tl-tabs {
  height: 12px;
  flex: none;
  display: flex;
  position: relative;
  padding-left: 5px;
  background: #333;
  color: #6a6a6a;
  font-size: 5.8px;
}
.tl-tab { display: flex; align-items: center; gap: 2px; line-height: 12px; white-space: nowrap; box-sizing: border-box; }
.tl-tab i { width: 5px; height: 5px; background: #9c9480; flex: none; }
.tl-tab.active { background: #4b4b4b; color: #c0c0c0; font-weight: bold; padding: 0 3px; }
.tl-tab.active i { background: #bbb; }
.tl-menu { top: 4px; }
.tl-top { height: 26px; flex: none; display: flex; }
.tl-controls { width: 318px; flex: none; display: flex; flex-direction: column; border-right: 1px solid #333; box-sizing: border-box; }
.tl-head { height: 17px; display: flex; position: relative; }
.timecode { width: 55px; padding-left: 7px; box-sizing: border-box; display: flex; flex-direction: column; white-space: nowrap; }
.timecode b { font-size: 8.5px; line-height: 10px; font-weight: normal; color: #d6b23e; }
.timecode span { font-size: 5px; line-height: 5px; color: #b68b3a; }
.tl-search { width: 135px; height: 8px; margin-top: 3px; background: #a3a3a3; }
.tl-icons { position: relative; margin-left: 7px; margin-top: 4px; }
.tl-icons svg { position: absolute; top: 0; }
.mb-sel { position: absolute; left: 63px; top: -2px; width: 12px; height: 12px; background: #2c2c2c; }
.col-head {
  height: 9px;
  line-height: 9px;
  background: #5c5c5c;
  color: #bbb;
  font-size: 5px;
  position: relative;
}
.ch-name { position: absolute; left: 69px; }
.ch-parent { position: absolute; left: 254px; }
.ruler { position: relative; flex: 1; background: #424242; overflow: hidden; }
.nav-bar { position: absolute; left: 2px; right: 2px; top: 2px; height: 4px; background: #9a9a9a; }
.tick { position: absolute; top: 6px; width: 0; }
.tick span { position: absolute; left: -12px; width: 24px; text-align: center; color: #a4a4a4; font-size: 5.5px; line-height: 6px; white-space: nowrap; }
.tick.last span { left: -22px; }
.tick i { position: absolute; top: 6px; left: 0; width: 1px; height: 2px; background: #aaa; }
.tick.major i { height: 4px; }
.work-bar { position: absolute; left: 333px; width: 361px; top: 16px; height: 7px; background: #8d8d84; }
.wa-handle { position: absolute; top: 15px; width: 3px; height: 9px; background: #c9a84a; }
.cache { position: absolute; top: 23px; height: 2px; background: #56b85e; }
.cti-head {
  position: absolute;
  left: 498px;
  top: 5px;
  width: 7px;
  height: 10px;
  background: #d9bf57;
  clip-path: polygon(0 0, 100% 0, 100% 60%, 50% 100%, 0 60%);
}
.tl-side { width: 10px; flex: none; background: #3e3e3e; }

.tl-main { flex: 1; display: flex; min-height: 0; }
.tl-rows { flex: 1; position: relative; display: flex; flex-direction: column; }
.tl-row { height: 8.5px; flex: none; display: flex; line-height: 8.5px; }
.tl-left {
  width: 318px;
  flex: none;
  display: flex;
  align-items: center;
  white-space: nowrap;
  box-sizing: border-box;
  border-right: 1px solid #333;
  position: relative;
}
.tl-track { flex: 1; position: relative; }
.tl-row.layer .tl-left, .tl-row.layer .tl-track { background: #434343; }
.tl-row.prop .tl-left, .tl-row.prop .tl-track { background: #4b4b4b; }
.sw-col { width: 36px; flex: none; display: flex; align-items: center; padding-left: 2px; box-sizing: border-box; position: relative; }
.sw-col svg { position: absolute; left: 2px; }
.ghost { width: 6px; height: 6px; border: 1px solid #4f4f4f; box-sizing: border-box; }
.sw-col .ghost:nth-of-type(1) { margin-left: 16px; }
.twirl { width: 7px; flex: none; font-size: 6px; color: #ccc; text-align: center; }
.label { width: 5px; height: 5px; margin: 0 2px 0 1px; flex: none; }
.num { width: 13px; flex: none; text-align: right; padding-right: 6px; box-sizing: border-box; color: #ccc; }
.src { width: 6px; height: 6px; margin: 0 2px 0 7px; flex: none; box-sizing: border-box; }
.src-file { background: #e4e4e4; clip-path: polygon(0 0, 70% 0, 100% 30%, 100% 100%, 0 100%); }
.src-star { background: #ddd; clip-path: polygon(50% 0, 100% 50%, 50% 100%, 0 50%); }
.src-text { background: linear-gradient(#777 20%, transparent 20%), linear-gradient(90deg, transparent 40%, #888 40%, #888 60%, transparent 60%); }
.src-solid { background: #8ab7c4; }
.lname { width: 105px; flex: none; font-weight: bold; color: #d2d2d2; display: flex; align-items: center; padding-right: 2px; box-sizing: border-box; }
.lname.plain { font-weight: normal; }
.lname.shifted span { margin-left: 2px; }
.matte { width: 7px; height: 6px; box-sizing: border-box; flex: none; }
.matte.light { background: #111; border: 1px solid #eee; box-shadow: inset 0 0 0 1px #eee; }
.matte.dark { background: #eee; border: 1px solid #eee; box-shadow: inset 0 0 0 2px #111; }
.lpen { margin-left: auto; }
.sel .lname { background: #dcdcdc; color: #222; margin-left: -1px; padding-left: 1px; }
.sel .tl-left { background: #4f4f4f !important; }
.switches { width: 38px; flex: none; display: flex; align-items: center; padding-left: 3px; box-sizing: border-box; position: relative; }
.switches small { position: absolute; left: 25px; font-size: 6px; font-style: italic; color: #ccc; }
.cam-ic { position: absolute; left: 36px; width: 6px; height: 5px; background: #bbb; }
.modes { width: 28px; flex: none; display: flex; padding-left: 2px; box-sizing: border-box; gap: 3px; }
.spiral { width: 5px; height: 5px; margin: 0 3px 0 6px; border: 1px solid #888; border-radius: 50%; box-sizing: border-box; flex: none; }
.parent {
  width: 43px;
  height: 7px;
  line-height: 7px;
  padding: 0 2px 0 3px;
  box-sizing: border-box;
  display: flex;
  justify-content: space-between;
  background: #3d3d3d;
  color: #a0a0a0;
  flex: none;
}
.nav { width: 62px; flex: none; display: flex; gap: 4px; padding-left: 4px; box-sizing: border-box; font-size: 5px; color: #aaa; }
.nav em:nth-child(2) { color: #555; }
.nav em.lit { color: #eee !important; }
.stop { width: 5px; height: 5px; background: #c0c0c0; border-radius: 50%; flex: none; margin-left: 1px; }
.stop.deep { margin-left: 18px; }
.graph { width: 5px; height: 5px; margin: 0 3px 0 5px; border-left: 1px solid #aaa; border-bottom: 1px solid #aaa; box-sizing: border-box; flex: none; }
.pname { color: #b6b6b6; }
.pvalue {
  position: absolute;
  left: 186px;
  display: flex;
  align-items: center;
  gap: 1px;
  color: #c9a338;
}
.bar { position: absolute; top: 0; bottom: 0.5px; }
.bar.thin { top: 0; bottom: 1px; }
.key {
  position: absolute;
  top: 1.5px;
  width: 4px;
  height: 6px;
  background: #e6e6e6;
  clip-path: polygon(0 0, 100% 0, 65% 50%, 100% 100%, 0 100%, 35% 50%);
}
.dot { position: absolute; top: 3px; width: 2.5px; height: 2.5px; background: #ddd; border-radius: 50%; }
.tl-empty { flex: 1; display: flex; }
.tl-empty .tl-left { background: #4b4b4b; }
.tl-empty .tl-track { background: #4b4b4b; }
.work-shade {
  position: absolute;
  left: 653px;
  width: 359px;
  top: 0;
  bottom: 0;
  background: rgba(255, 255, 255, 0.07);
}
.cti-line {
  position: absolute;
  left: 820px;
  top: 0;
  bottom: 8px;
  width: 1px;
  background: #c73a55;
}
.scroller { display: flex; flex-direction: column; gap: 2px; padding: 3px 1px; box-sizing: border-box; }
.scroller i { height: 7px; background: #8a8a8a; }
.tl-foot {
  height: 9px;
  flex: none;
  display: flex;
  align-items: center;
  gap: 3px;
  padding-left: 3px;
  background: #454545;
  position: relative;
}
.foot-ic { width: 6px; height: 6px; border: 1px solid #aaa; box-sizing: border-box; }
.toggle {
  position: absolute;
  left: 184px;
  width: 135px;
  height: 8px;
  line-height: 8px;
  background: #3d3d3d;
  color: #aaa;
  padding-left: 3px;
  box-sizing: border-box;
}
.zoom-bar { position: absolute; left: 322px; width: 60px; height: 1px; background: #888; }
.bottom-edge { height: 3px; flex: none; background: #1b1b1b; }

/* watermark over everything */
.overlay { position: absolute; inset: 0; pointer-events: none; }
.dashes { position: absolute; left: 0; top: 0; }
.mark {
  position: absolute;
  width: 100px;
  margin-left: -50px;
  display: flex;
  flex-direction: column;
  align-items: center;
  color: rgba(50, 85, 105, 0.33);
}
.mark.dim { color: rgba(50, 85, 105, 0.06); }
.mark-cn {
  font: 13px/19px "Noto Sans CJK SC", sans-serif;
  letter-spacing: 10px;
  margin-right: -10px;
}
.mark-en { font: bold 11px/11px "Liberation Sans", sans-serif; letter-spacing: 0.6px; white-space: nowrap; }
.site {
  position: absolute;
  left: 527px;
  top: 9px;
  font: 38px/44px "Liberation Sans", sans-serif;
  color: rgba(170, 180, 195, 0.6);
  white-space: nowrap;
}
.brand {
  position: absolute;
  left: 549px;
  top: 662px;
  display: flex;
  align-items: center;
  gap: 4px;
}
.brand span {
  font: bold 33px/46px "Noto Sans CJK SC", sans-serif;
  color: rgba(165, 165, 165, 0.6);
  letter-spacing: 1px;
}
</style>
